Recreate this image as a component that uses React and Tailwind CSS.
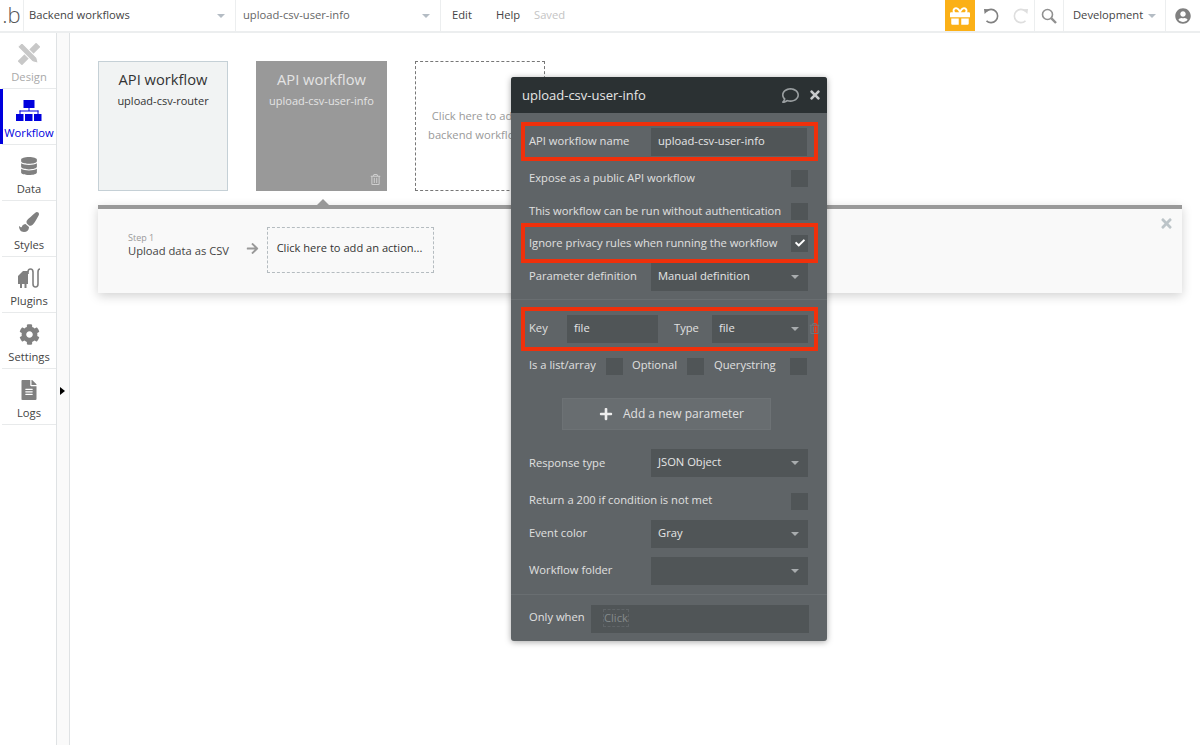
import {
  FaDatabase,
  FaPaintBrush,
  FaCog,
  FaFileAlt,
  FaGift,
  FaUserCircle,
  FaRegTrashAlt,
  FaRegComment,
  FaTimes,
  FaCheck,
  FaPlus,
  FaArrowRight,
} from "react-icons/fa";

function DesignIcon() {
  return (
    <svg width="22" height="22" viewBox="0 0 22 22" fill="#c8c8c8">
      {/* ruler */}
      <rect x="-2" y="8" width="26" height="6" transform="rotate(-45 11 11)" />
      {/* pencil, tip towards the bottom right */}
      <path d="M-2 8 H19 L24 11 L19 14 H-2 Z" stroke="white" strokeWidth="1" transform="rotate(45 11 11)" />
    </svg>
  );
}

function WorkflowIcon() {
  return (
    <svg width="26" height="21" viewBox="0 0 26 21" fill="#0000dd">
      <rect x="7.5" y="0" width="11" height="8" />
      <rect x="12.5" y="8" width="1" height="3" />
      <rect x="3.5" y="10.5" width="19" height="1" />
      <rect x="3.5" y="10.5" width="1" height="4" />
      <rect x="21.5" y="10.5" width="1" height="4" />
      <rect x="0" y="14" width="7.5" height="7" />
      <rect x="9" y="14" width="7.5" height="7" />
      <rect x="18" y="14" width="7.5" height="7" />
    </svg>
  );
}

function PluginIcon() {
  return (
    <svg width="24" height="21" viewBox="0 0 24 21" fill="none">
      <path d="M1 8 L6 3 H11 V16 H1 Z" fill="#808080" />
      <rect x="3" y="16" width="2" height="4" fill="#808080" />
      <rect x="7.5" y="16" width="2" height="4" fill="#808080" />
      <path d="M11 6 V4 Q11 1 13.5 1 Q16 1 16 4 V16 Q16 19 18.5 19 Q21 19 21 16 V4 Q21 1 23 1" stroke="#808080" strokeWidth="1.6" />
    </svg>
  );
}

function ArcIcon({ flip, color }) {
  return (
    <svg width="16" height="16" viewBox="0 0 16 16" fill="none" className={flip ? "-scale-x-100" : ""}>
      <path d="M3.5 3.2 A6.6 6.6 0 1 1 3.5 12.8" stroke={color} strokeWidth="1.6" />
      <path d="M1 1 L6.5 1.2 L1.6 6 Z" fill={color} />
    </svg>
  );
}

function SearchIcon() {
  return (
    <svg width="16" height="16" viewBox="0 0 16 16" fill="none" stroke="#909090">
      <circle cx="6.5" cy="6.5" r="5" strokeWidth="1.6" />
      <path d="M10.2 10.2 L15 15" strokeWidth="2.4" />
    </svg>
  );
}

function Caret({ className }) {
  return <span className={`h-0 w-0 border-x-[4.5px] border-t-[4px] border-x-transparent ${className}`} />;
}

const navItems = [
  { label: "Design", icon: <DesignIcon />, text: "text-[#a9a9a9]" },
  { label: "Workflow", icon: <WorkflowIcon />, text: "text-[#0000dd]", active: true },
  { label: "Data", icon: <FaDatabase size={18} color="#808080" />, text: "text-[#444]" },
  { label: "Styles", icon: <FaPaintBrush size={20} color="#808080" />, text: "text-[#444]" },
  { label: "Plugins", icon: <PluginIcon />, text: "text-[#444]" },
  { label: "Settings", icon: <FaCog size={21} color="#808080" />, text: "text-[#444]" },
  { label: "Logs", icon: <FaFileAlt size={20} color="#808080" />, text: "text-[#444]" },
];

function Topbar() {
  return (
    <div className="flex h-[33px] shrink-0 items-stretch border-b-2 border-[#eceeef] bg-white text-[11.2px] text-[#444]">
      <div className="flex w-[24px] items-center justify-center border-r border-[#eceeef] pb-[3px] text-[22px] font-light leading-none text-[#555]">
        .b
      </div>
      <div className="flex w-[212px] items-center justify-between border-r border-[#eceeef] pl-[5px] pr-[10px]">
        <span>Backend workflows</span>
        <Caret className="border-t-[#b4bcc4]" />
      </div>
      <div className="flex w-[205px] items-center justify-between border-r border-[#eceeef] pl-[7px] pr-[10px] text-[#666]">
        <span>upload-csv-user-info</span>
        <Caret className="border-t-[#b4bcc4]" />
      </div>
      <div className="flex items-center pl-[11px]">
        <span className="w-[44px]">Edit</span>
        <span className="w-[38px]">Help</span>
        <span className="text-[#c4c4c4]">Saved</span>
      </div>
      <div className="flex-1" />
      <div className="flex w-[30px] items-center justify-center bg-[#fbb017]">
        <FaGift size={20} color="white" />
      </div>
      <div className="flex w-[60px] items-center gap-[14px] border-r border-[#eceeef] pl-[8px]">
        <ArcIcon color="#808080" />
        <ArcIcon flip color="#dedede" />
      </div>
      <div className="flex w-[29px] items-center justify-center border-r border-[#eceeef]">
        <SearchIcon />
      </div>
      <div className="flex w-[102px] items-center justify-between border-r border-[#eceeef] pl-[9px] pr-[9px]">
        <span>Development</span>
        <Caret className="border-t-[#b4bcc4]" />
      </div>
      <div className="flex max-w-[34px] flex-1 items-center justify-center">
        <FaUserCircle size={16} color="#808080" />
      </div>
    </div>
  );
}

function Sidebar() {
  return (
    <div className="flex shrink-0">
      <div className="w-[57px] border-r border-[#dfe2e4] bg-white pl-[2px]">
        {navItems.map((item) => (
          <div key={item.label} className="relative flex h-[56px] flex-col items-center border-b border-[#e8eaeb] pt-[10px]">
            {item.active && <div className="absolute -left-[2px] top-0 h-full w-[3px] bg-[#0000dd]" />}
            <div className="flex h-[22px] items-center">{item.icon}</div>
            <div className={`mt-[3px] text-[11.2px] leading-[18px] ${item.text}`}>{item.label}</div>
          </div>
        ))}
      </div>
      <div className="relative w-[13px] border-r border-[#dfe2e4] bg-[#fafafa]">
        <span className="absolute left-[3px] top-[354px] h-0 w-0 border-y-[4px] border-l-[5px] border-y-transparent border-l-black" />
      </div>
    </div>
  );
}

function Check({ checked, className = "" }) {
  return (
    <div className={`flex h-[17px] w-[17px] shrink-0 items-center justify-center bg-[#505557] ${className}`}>
      {checked && <FaCheck size={10} color="white" />}
    </div>
  );
}

function Input({ children, className = "w-[156px]" }) {
  return (
    <div className={`flex h-[28px] shrink-0 items-center bg-[#505557] pb-[1px] pl-[7px] text-[#e6e6e6] ${className}`}>
      {children}
    </div>
  );
}

function Select({ value, className = "w-[157px]" }) {
  return (
    <div className={`flex h-[28px] shrink-0 items-center justify-between bg-[#505557] pb-[1px] pl-[7px] pr-[9px] text-[#e6e6e6] ${className}`}>
      <span>{value}</span>
      <Caret className="border-t-[#a8acae]" />
    </div>
  );
}

function LabelRow({ label, children, lift = true, className = "" }) {
  return (
    <div className={`flex items-center justify-between pl-[18px] pr-[19px] ${className}`}>
      <span className={lift ? "-translate-y-[1px]" : ""}>{label}</span>
      {children}
    </div>
  );
}

function PropertyEditor() {
  return (
    <div className="absolute left-[511px] top-[77px] flex h-[564px] w-[316px] flex-col rounded-[3px] bg-[#5f6467] text-[11.2px] text-[#e0e0e0] shadow-[0_1px_6px_rgba(0,0,0,0.35)]">
      <div className="flex h-[36px] shrink-0 items-center justify-between rounded-t-[3px] bg-[#2b3133] pl-[11px] pr-[5px] text-[13px] text-[#e6e6e6]">
        <span className="pt-[1px]">upload-csv-user-info</span>
        <div className="flex items-center gap-[9px]">
          <FaRegComment size={17} color="#9a9fa1" />
          <FaTimes size={14} color="#c8cbcc" />
        </div>
      </div>

      <div className="ml-[10px] mr-[9px] mt-[9px] flex h-[39px] items-center justify-between border-4 border-[#f0300b] pl-[4px] pr-[7px]">
        <span>API workflow name</span>
        <Input>upload-csv-user-info</Input>
      </div>

      <LabelRow label="Expose as a public API workflow" lift={false} className="mt-[5px] h-[24px]">
        <Check />
      </LabelRow>
      <LabelRow label="This workflow can be run without authentication" lift={false} className="mt-[9px] h-[24px]">
        <Check />
      </LabelRow>

      <div className="ml-[10px] mr-[9px] flex h-[40px] items-center justify-between border-4 border-[#f0300b] pl-[4px] pr-[6px]">
        <span>Ignore privacy rules when running the workflow</span>
        <Check checked />
      </div>

      <LabelRow label="Parameter definition" className="h-[28px]">
        <Select value="Manual definition" />
      </LabelRow>

      <div className="mt-[8px] border-t border-[#696e71]" />

      <div className="relative ml-[10px] mr-[9px] mt-[7px] flex h-[44px] items-center border-4 border-[#f0300b] pl-[4px] pr-[6px]">
        <span className="w-[38px] -translate-y-[1px]">Key</span>
        <Input className="w-[91px]">file</Input>
        <span className="ml-[16px] w-[38px] -translate-y-[1px]">Type</span>
        <Select value="file" className="w-[96px]" />
        <FaRegTrashAlt size={11} color="#70757a" className="absolute -right-[6px] top-[12px]" />
      </div>

      <div className="mt-[7px] flex h-[17px] items-center pl-[18px]">
        <span className="w-[77px] -translate-y-[1px]">Is a list/array</span>
        <Check className="mr-[9px]" />
        <span className="w-[55px] -translate-y-[1px]">Optional</span>
        <Check className="mr-[10px]" />
        <span className="w-[76px] -translate-y-[1px]">Querystring</span>
        <Check />
      </div>

      <div className="ml-[51px] mt-[23px] flex h-[32px] w-[209px] items-center justify-center gap-[10px] border border-[#6d7275] bg-[#686d70] pl-[10px] text-[12px]">
        <FaPlus size={14} color="#eeeeee" />
        <span>Add a new parameter</span>
      </div>

      <LabelRow label="Response type" lift={false} className="mt-[19px] h-[28px]">
        <Select value="JSON Object" />
      </LabelRow>
      <LabelRow label="Return a 200 if condition is not met" className="mt-[16px] h-[17px]">
        <Check />
      </LabelRow>
      <LabelRow label="Event color" className="mt-[10px] h-[28px]">
        <Select value="Gray" />
      </LabelRow>
      <LabelRow label="Workflow folder" className="mt-[9px] h-[28px]">
        <Select value="" />
      </LabelRow>

      <div className="mt-[9px] border-t border-[#696e71]" />

      <div className="mt-[10px] flex items-center pl-[18px]">
        <span className="w-[62px] -translate-y-[2px]">Only when</span>
        <div className="flex h-[28px] w-[218px] items-center bg-[#505557] pb-[2px] pl-[12px]">
          <span className="border border-dashed border-[#5f6467] text-[#858a8c]">Click</span>
        </div>
      </div>
    </div>
  );
}

function Canvas() {
  return (
    <div className="relative flex-1 bg-white pl-[28px] pt-[28px]">
      <div className="flex gap-[28px]">
        <div className="flex h-[130px] w-[130px] flex-col items-center border border-[#c5d0d6] bg-[#f1f3f3] pt-[6px] text-[#333]">
          <div className="text-[14.7px] leading-[22px]">API workflow</div>
          <div className="mt-[3px] text-[11px] leading-[16px]">upload-csv-router</div>
        </div>
        <div className="relative flex h-[130px] w-[131px] flex-col items-center bg-[#999999] pt-[7px] text-[#e4e4e4]">
          <div className="text-[14.7px] leading-[22px]">API workflow</div>
          <div className="mt-[3px] text-[11px] leading-[16px]">upload-csv-user-info</div>
          <FaRegTrashAlt size={11} color="#cfcfcf" className="absolute bottom-[6px] right-[6px]" />
        </div>
        <div className="flex h-[130px] w-[130px] flex-col items-center justify-center border border-dashed border-[#777] pb-[2px] text-[11.2px] leading-[19px] text-[#999]">
          <span className="whitespace-nowrap">Click here to add a</span>
          <span className="whitespace-nowrap">backend workflow...</span>
        </div>
      </div>

      <div className="relative mt-[14px] h-[88px] w-[1084px] border-t-4 border-[#999999] bg-[#f9f9f9] shadow-[0_3px_10px_rgba(0,0,0,0.18)]">
        <span className="absolute -top-[10px] left-[219px] h-0 w-0 border-x-[6px] border-b-[6px] border-x-transparent border-b-[#999999]" />
        <div className="flex items-start pl-[30px] pt-[18px]">
          <div className="mt-[6px] w-[102px]">
            <div className="text-[9px] leading-[10px] text-[#999]">Step 1</div>
            <div className="text-[11.2px] leading-[16px] text-[#444]">Upload data as CSV</div>
          </div>
          <FaArrowRight size={13} color="#999999" className="ml-[16px] mt-[15px]" />
          <div className="ml-[8px] flex h-[46px] w-[167px] items-center justify-center border border-dashed border-[#b5bcc0] pb-[4px] pr-[2px] text-[11.1px] text-[#333]">
            Click here to add an action...
          </div>
        </div>
        <FaTimes size={15} color="#bcc4c8" className="absolute right-[8px] top-[7px]" />
      </div>
    </div>
  );
}

export default function App() {
  return (
    <div className="relative flex h-[745px] w-[1200px] flex-col overflow-hidden bg-white font-['Open_Sans',sans-serif]">
      <Topbar />
      <div className="flex flex-1">
        <Sidebar />
        <Canvas />
      </div>
      <PropertyEditor />
    </div>
  );
}
